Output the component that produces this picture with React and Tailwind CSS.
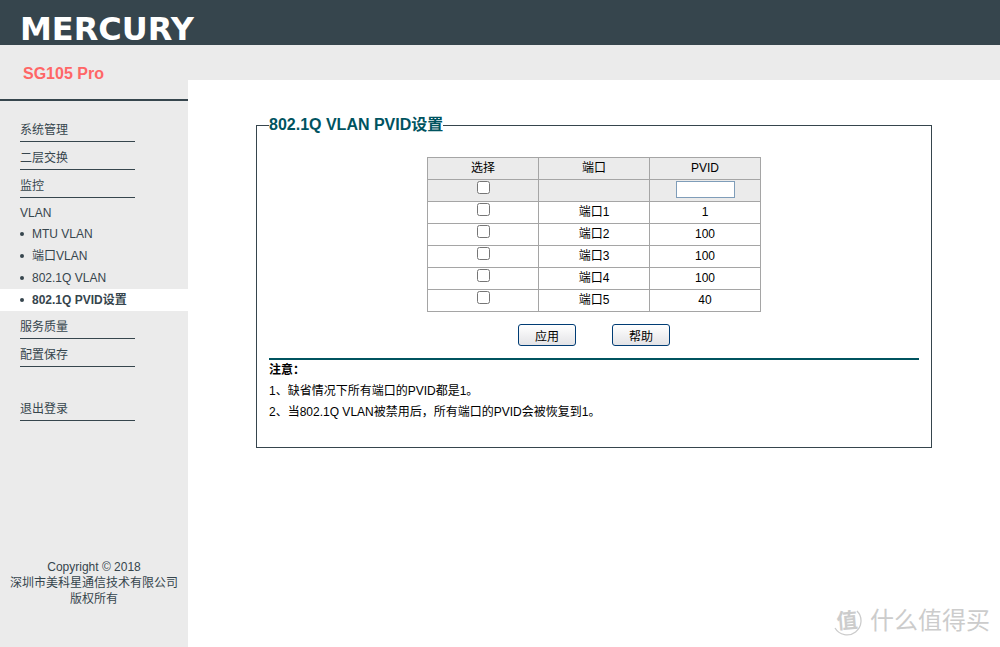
import React from 'react';

const FONT = 'font-["Liberation_Sans","Noto_Sans_CJK_SC",sans-serif]';

const vlanItems = [
  { name: 'MTU VLAN' },
  { name: '端口VLAN' },
  { name: '802.1Q VLAN' },
  { name: '802.1Q PVID设置', active: true },
];

const ports = [
  { name: '端口1', pvid: 1 },
  { name: '端口2', pvid: 100 },
  { name: '端口3', pvid: 100 },
  { name: '端口4', pvid: 100 },
  { name: '端口5', pvid: 40 },
];

function MenuLink({ children }) {
  return (
    <a href="#" className="ml-5 flex h-7 w-[115px] items-end border-b border-[#36454d]">
      <span className="leading-[22px]">{children}</span>
    </a>
  );
}

function Sidebar() {
  return (
    <aside className="flex w-[188px] shrink-0 flex-col bg-[#ebebeb] text-xs text-[#36454d]">
      <h1 className="flex h-14 items-center border-b-2 border-[#36454d] pl-[23px] pt-1 text-base font-bold text-[#ff6666]">
        SG105 Pro
      </h1>
      <nav className="mt-[13px]">
        <MenuLink>系统管理</MenuLink>
        <MenuLink>二层交换</MenuLink>
        <MenuLink>监控</MenuLink>
        <a href="#" className="flex h-[25px] items-center pl-5 pt-1">
          VLAN
        </a>
        <ul>
          {vlanItems.map((item) => (
            <li key={item.name} className={item.active ? 'bg-white font-bold' : ''}>
              <a href="#" className="flex h-[22px] items-center pl-5">
                <span className="mr-2 size-1 rounded-full bg-[#36454d]" />
                {item.name}
              </a>
            </li>
          ))}
        </ul>
        <MenuLink>服务质量</MenuLink>
        <MenuLink>配置保存</MenuLink>
        <div className="mt-[26px]">
          <MenuLink>退出登录</MenuLink>
        </div>
      </nav>
      <footer className="mt-auto pb-10 text-center leading-4">
        <p>Copyright © 2018</p>
        <p>深圳市美科星通信技术有限公司</p>
        <p>版权所有</p>
      </footer>
    </aside>
  );
}

function PortCheckbox({ label }) {
  return (
    <input type="checkbox" aria-label={label} className="mx-auto mt-px block size-[13px]" />
  );
}

function PvidTable() {
  const cell = 'h-[22px] border border-[#a5a5a5] p-0 pb-0.5';
  return (
    <table className="mx-auto w-[334px] table-fixed border-collapse text-center leading-[18px]">
      <thead className="bg-[#ebebeb]">
        <tr>
          <th className={`${cell} font-normal`}>选择</th>
          <th className={`${cell} font-normal`}>端口</th>
          <th className={`${cell} font-normal`}>PVID</th>
        </tr>
        <tr>
          <td className={`${cell} align-top`}>
            <PortCheckbox label="全部端口" />
          </td>
          <td className={cell} />
          <td className={cell}>
            <input
              type="text"
              aria-label="PVID"
              className="mx-auto block h-[17px] w-[59px] border border-[#7f9db9] bg-white px-1"
            />
          </td>
        </tr>
      </thead>
      <tbody>
        {ports.map((port) => (
          <tr key={port.name}>
            <td className={`${cell} align-top`}>
              <PortCheckbox label={port.name} />
            </td>
            <td className={cell}>{port.name}</td>
            <td className={cell}>{port.pvid}</td>
          </tr>
        ))}
      </tbody>
    </table>
  );
}

function Button({ children }) {
  return (
    <button
      type="button"
      className="h-[22px] w-[58px] rounded-[3px] border border-[#003c74] bg-linear-to-b from-white to-[#e3e3e6] pt-0.5 text-center leading-5"
    >
      {children}
    </button>
  );
}

function Watermark() {
  return (
    <div className="absolute bottom-2.5 right-2.5 flex items-center gap-2 text-[#cccccc]">
      <svg width="30" height="30" viewBox="0 0 30 30" fill="none" stroke="currentColor">
        <path d="M25 5A14 14 0 1 1 3 22" strokeWidth="1.3" />
        <text
          x="15"
          y="22"
          textAnchor="middle"
          fontSize="21"
          fontWeight="bold"
          fill="currentColor"
          stroke="none"
          transform="rotate(-5 15 15)"
        >
          值
        </text>
      </svg>
      <span className="text-2xl [text-shadow:-1px_-1px_0_#fff]">什么值得买</span>
    </div>
  );
}

export default function App() {
  return (
    <div className={`relative flex min-h-screen flex-col bg-white text-xs text-black ${FONT}`}>
      <header className="flex h-[45px] items-center bg-[#36454d] pl-5 pt-3">
        <span className="font-['DejaVu_Sans',sans-serif] text-[32px] leading-8 font-bold text-white">
          MERCURY
        </span>
      </header>
      <div className="flex grow">
        <Sidebar />
        <main className="min-w-0 grow">
          <div className="h-[35px] bg-[#ebebeb]" />
          <form className="px-[68px] pt-[33px]" onSubmit={(e) => e.preventDefault()}>
            <fieldset className="border border-[#36454d] px-3 pb-6">
              <legend className="text-base leading-6 font-bold text-[#00535f]">
                802.1Q VLAN PVID设置
              </legend>
              <div className="pt-5">
                <PvidTable />
              </div>
              <div className="flex justify-center gap-9 py-3">
                <Button>应用</Button>
                <Button>帮助</Button>
              </div>
              <div className="border-t-2 border-[#00535f] leading-[21px]">
                <p className="font-bold">注意：</p>
                <p>1、缺省情况下所有端口的PVID都是1。</p>
                <p>2、当802.1Q VLAN被禁用后，所有端口的PVID会被恢复到1。</p>
              </div>
            </fieldset>
          </form>
        </main>
      </div>
      <Watermark />
    </div>
  );
}
